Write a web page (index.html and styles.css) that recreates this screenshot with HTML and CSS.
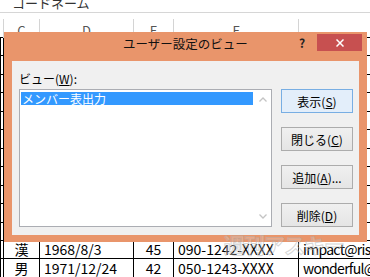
FILE: index.html
```html
<!DOCTYPE html>
<html>
<head>
  <title>ユーザー設定のビュー</title>
  <meta charset="UTF-8">
  <link rel="stylesheet" href="styles.css">
</head>
<body>
  <div class="sheet">
    <div class="name-bar"><span class="name-text">コードネーム</span></div>
    <table class="grid">
      <colgroup>
        <col class="col-b">
        <col class="col-c">
        <col class="col-d">
        <col class="col-e">
        <col class="col-f">
        <col class="col-g">
        <col class="col-h">
      </colgroup>
      <tr class="col-head">
        <th></th><th>C</th><th>D</th><th>E</th><th>F</th><th class="hidden-head" colspan="2"></th>
      </tr>
      <tr><td></td><td></td><td></td><td></td><td></td><td></td><td></td></tr>
      <tr><td></td><td></td><td></td><td></td><td></td><td></td><td></td></tr>
      <tr><td></td><td></td><td></td><td></td><td></td><td></td><td></td></tr>
      <tr><td></td><td></td><td></td><td></td><td></td><td></td><td></td></tr>
      <tr><td></td><td></td><td></td><td></td><td></td><td></td><td></td></tr>
      <tr><td></td><td></td><td></td><td></td><td></td><td></td><td></td></tr>
      <tr><td></td><td></td><td></td><td></td><td></td><td></td><td></td></tr>
      <tr><td></td><td></td><td></td><td></td><td></td><td></td><td></td></tr>
      <tr><td></td><td></td><td></td><td></td><td></td><td></td><td></td></tr>
      <tr><td></td><td></td><td></td><td></td><td></td><td></td><td></td></tr>
      <tr><td></td><td></td><td></td><td></td><td></td><td></td><td></td></tr>
      <tr>
        <td></td><td class="center">漢</td><td>1968/8/3</td><td class="center">45</td><td>090-1242-XXXX</td><td class="mail" colspan="2">impact@risk.co.jp</td>
      </tr>
      <tr>
        <td></td><td class="center">男</td><td>1971/12/24</td><td class="center">42</td><td>050-1243-XXXX</td><td class="mail" colspan="2">wonderful@web.jp</td>
      </tr>
    </table>
  </div>

  <div class="dialog">
    <div class="title-bar">
      <div class="title">ユーザー設定のビュー</div>
      <span class="help">?</span>
      <span class="close">
        <svg width="8" height="8" viewBox="0 0 8 8"><path d="M0.5 0.5 L7.5 7.5 M7.5 0.5 L0.5 7.5" stroke="#fff" stroke-width="1.5" fill="none"/></svg>
      </span>
    </div>
    <div class="dialog-body">
      <div class="view-column">
        <label class="view-label">ビュー(<u>W</u>):</label>
        <div class="listbox">
          <div class="list-items">
            <div class="list-item selected">メンバー表出力</div>
          </div>
          <div class="scrollbar">
            <svg width="8" height="5" viewBox="0 0 8 5"><path d="M0.5 4.5 L4 1 L7.5 4.5" stroke="#c4c4c4" stroke-width="1.3" fill="none"/></svg>
            <svg width="8" height="5" viewBox="0 0 8 5"><path d="M0.5 0.5 L4 4 L7.5 0.5" stroke="#c4c4c4" stroke-width="1.3" fill="none"/></svg>
          </div>
        </div>
      </div>
      <div class="button-column">
        <button class="btn default">表示(<u>S</u>)</button>
        <button class="btn">閉じる(<u>C</u>)</button>
        <button class="btn">追加(<u>A</u>)...</button>
        <button class="btn">削除(<u>D</u>)</button>
      </div>
    </div>
  </div>

  <div class="watermark">週刊アスキー</div>
</body>
</html>
```

FILE: styles.css
```css
body {
  margin: 0;
  width: 370px;
  height: 277px;
  overflow: hidden;
  background-color: #fff;
  font-family: "Noto Sans CJK JP", "Noto Sans", sans-serif;
  position: relative;
}

/* spreadsheet behind the dialog */
.name-bar {
  height: 12px;
  border-bottom: 1px solid #d6d6d6;
  padding-left: 12px;
  overflow: hidden;
  margin-bottom: 6px;
}

.name-text {
  display: block;
  font-size: 13px;
  line-height: 6px;
  color: #333;
}

.grid {
  border-collapse: collapse;
  table-layout: fixed;
  width: 424px;
  font-size: 14px;
  color: #000;
}

.col-b { width: 3px; }
.col-c { width: 36px; }
.col-d { width: 94px; }
.col-e { width: 40px; }
.col-f { width: 125px; }
.col-g { width: 64px; }
.col-h { width: 62px; }

.col-head th {
  height: 18px;
  padding: 0;
  font-weight: normal;
  font-size: 13px;
  line-height: 13px;
  color: #555;
  vertical-align: bottom;
  border-right: 1px solid #d4d4d4;
}

.col-head .hidden-head {
  border-right: none;
}

.grid td {
  height: 17.46px;
  padding: 0 4px;
  border: 1px solid #000;
  line-height: 17px;
  white-space: nowrap;
  overflow: hidden;
}

.grid td:first-child {
  padding: 0;
}

.grid .center {
  text-align: center;
}

.grid .mail {
  letter-spacing: -0.7px;
}

/* dialog window */
.dialog {
  position: absolute;
  left: 4px;
  top: 32px;
  width: 363px;
  height: 210px;
  box-sizing: border-box;
  padding: 0 8px 7px 8px;
  background-color: #e9956b;
  display: flex;
  flex-direction: column;
}

.title-bar {
  height: 29px;
  position: relative;
}

.title {
  text-align: center;
  font-size: 12.5px;
  line-height: 16px;
  padding-top: 4px;
  color: #111;
  margin-left: -8px;
  margin-right: -8px;
}

.help {
  position: absolute;
  left: 287px;
  top: 3px;
  font-size: 12px;
  line-height: 16px;
  font-weight: bold;
  color: #222;
}

.close {
  position: absolute;
  right: -3px;
  top: 2px;
  width: 45px;
  height: 17px;
  background-color: #c75050;
  display: flex;
  align-items: center;
  justify-content: center;
}

.dialog-body {
  flex: 1;
  background-color: #f0f0f0;
  display: flex;
  gap: 9px;
  padding: 10px 6px 8px 7px;
  font-size: 12px;
  color: #000;
}

.view-column {
  display: flex;
  flex-direction: column;
  width: 253px;
}

.view-label {
  line-height: 15px;
  margin-bottom: 3px;
}

.listbox {
  flex: 1;
  display: flex;
  background-color: #fff;
  border: 1px solid #abadb3;
}

.list-items {
  flex: 1;
  padding: 2px 1px 0 1px;
}

.list-item {
  line-height: 13px;
  height: 13px;
  padding-left: 1px;
}

.list-item.selected {
  background-color: #3399ff;
  color: #fff;
}

.scrollbar {
  width: 17px;
  display: flex;
  flex-direction: column;
  justify-content: space-between;
  align-items: center;
  padding: 7px 0 7px 0;
}

.button-column {
  display: flex;
  flex-direction: column;
  gap: 14px;
  margin-top: 18px;
}

.btn {
  width: 72px;
  height: 24px;
  padding: 0;
  font-family: "Noto Sans CJK JP", "Noto Sans", sans-serif;
  font-size: 12px;
  color: #000;
  border: 1px solid #acacac;
  background: linear-gradient(#f0f0f0, #e5e5e5);
}

.btn.default {
  border-color: #78aee3;
  background: #e3eefa;
}

.watermark {
  position: absolute;
  left: 224px;
  top: 229px;
  font-size: 21px;
  font-weight: bold;
  color: rgba(255, 255, 255, 0.2);
  -webkit-text-stroke: 1px rgba(175, 175, 175, 0.5);
  letter-spacing: -1px;
}
```
